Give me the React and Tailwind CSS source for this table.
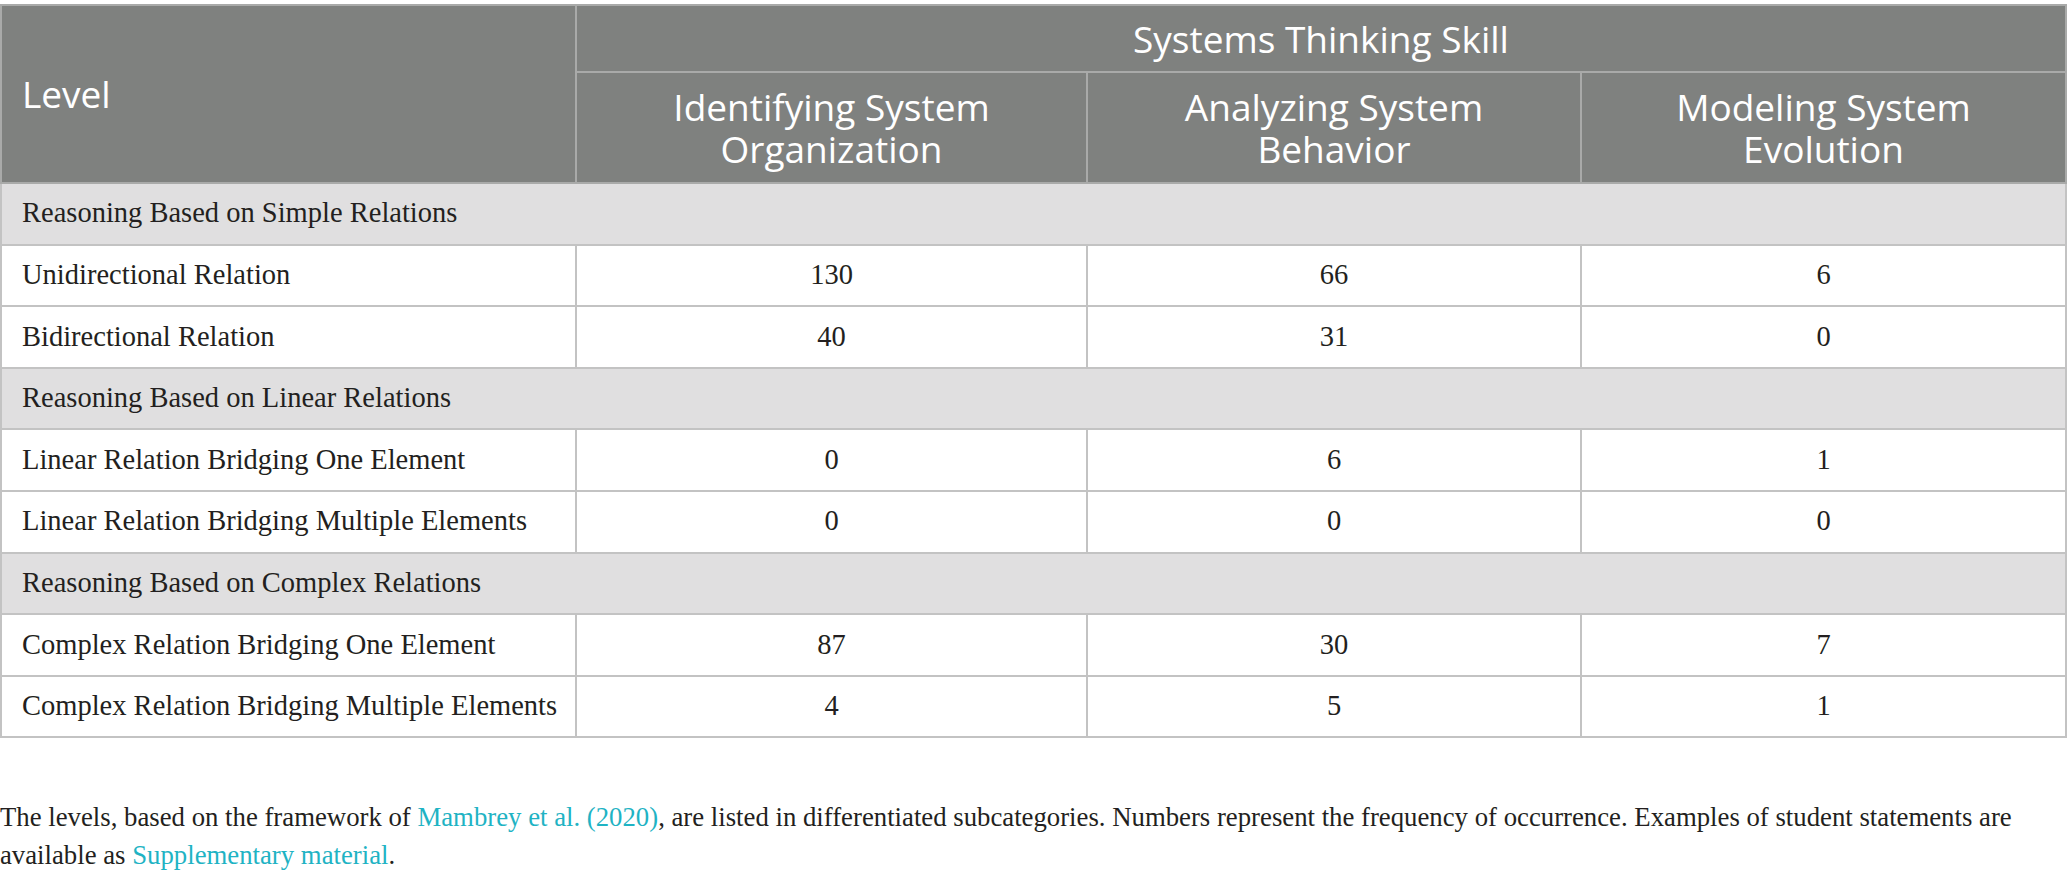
const rows = [
  { group: "Reasoning Based on Simple Relations" },
  { label: "Unidirectional Relation", values: ["130", "66", "6"] },
  { label: "Bidirectional Relation", values: ["40", "31", "0"] },
  { group: "Reasoning Based on Linear Relations" },
  { label: "Linear Relation Bridging One Element", values: ["0", "6", "1"] },
  { label: "Linear Relation Bridging Multiple Elements", values: ["0", "0", "0"] },
  { group: "Reasoning Based on Complex Relations" },
  { label: "Complex Relation Bridging One Element", values: ["87", "30", "7"] },
  { label: "Complex Relation Bridging Multiple Elements", values: ["4", "5", "1"] },
]

const serif = "font-['Liberation_Serif',serif]"
const sans = "font-['Open_Sans',sans-serif]"

export default function App() {
  return (
    <div className="w-[2067px] bg-white pt-[4px] text-[#231f20]">
      <table className="w-full table-fixed border-collapse border-2 border-[#c3c3c3]">
        <colgroup>
          <col className="w-[575px]" />
          <col className="w-[511px]" />
          <col className="w-[494px]" />
          <col />
        </colgroup>
        <thead className={`${sans} bg-[#7f817f] text-white text-[37px] leading-[42px]`}>
          <tr className="h-[67px]">
            <th rowSpan={2} className="border-2 border-[#a9aaa9] text-left font-normal pl-[20px] align-middle">
              Level
            </th>
            <th colSpan={3} className="border-2 border-[#a9aaa9] font-normal text-center">
              Systems Thinking Skill
            </th>
          </tr>
          <tr className="h-[111px]">
            <th className="border-2 border-[#a9aaa9] font-normal text-center px-4">
              Identifying System
              <br />
              Organization
            </th>
            <th className="border-2 border-[#a9aaa9] font-normal text-center px-4">
              Analyzing System
              <br />
              Behavior
            </th>
            <th className="border-2 border-[#a9aaa9] font-normal text-center px-4">
              Modeling System
              <br />
              Evolution
            </th>
          </tr>
        </thead>
        <tbody className={`${serif} text-[28.5px]`}>
          {rows.map((r, i) =>
            r.group ? (
              <tr key={i} className="h-[61.6px] bg-[#e0dfe0]">
                <td colSpan={4} className="border-2 border-[#c3c3c3] pl-[20px]">
                  {r.group}
                </td>
              </tr>
            ) : (
              <tr key={i} className="h-[61.6px]">
                <td className="border-2 border-[#c3c3c3] pl-[20px]">{r.label}</td>
                {r.values.map((v, j) => (
                  <td key={j} className="border-2 border-[#c3c3c3] text-center">
                    {v}
                  </td>
                ))}
              </tr>
            )
          )}
        </tbody>
      </table>
      <p className={`${serif} mt-[60px] pr-[30px] text-[26.75px] leading-[38px]`}>
        The levels, based on the framework of{" "}
        <a className="text-[#1fb3c4]">Mambrey et al. (2020)</a>, are listed in differentiated
        subcategories. Numbers represent the frequency of occurrence. Examples of student statements
        are available as <a className="text-[#1fb3c4]">Supplementary material</a>.
      </p>
    </div>
  )
}
